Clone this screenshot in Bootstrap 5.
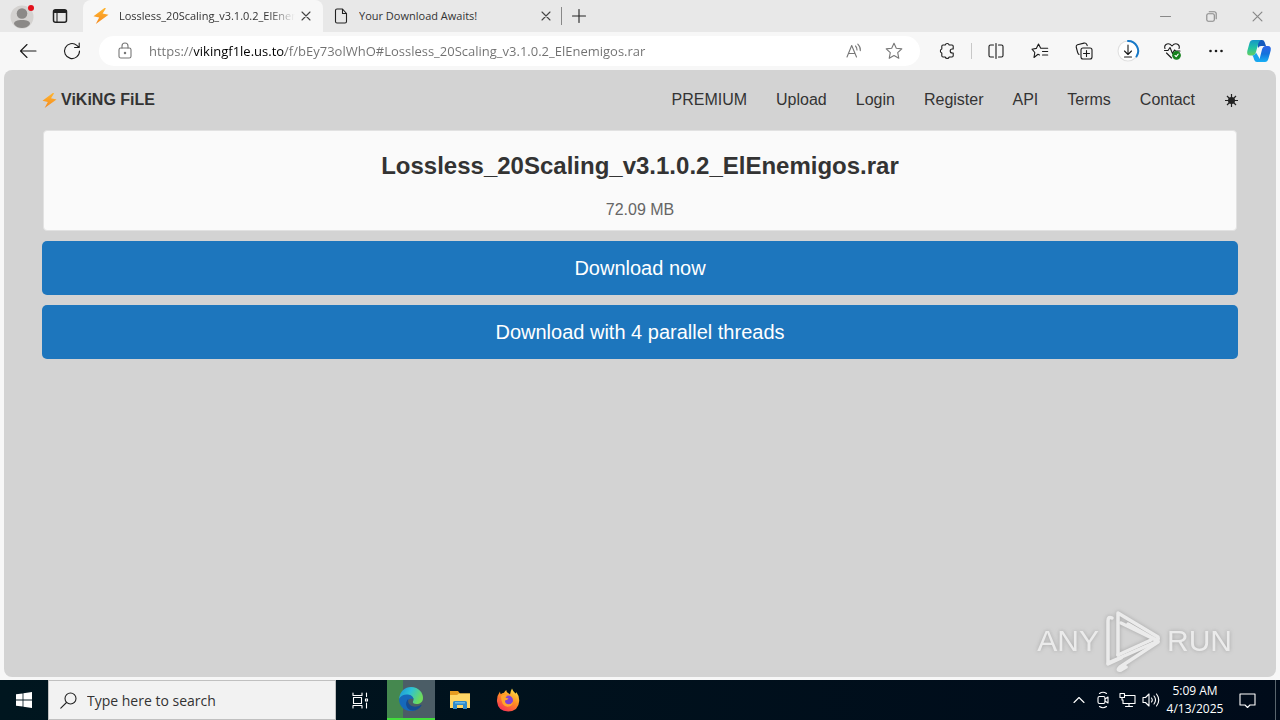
<!DOCTYPE html>
<html lang="en">
<head>
<meta charset="utf-8">
<meta name="viewport" content="width=device-width, initial-scale=1">
<title>Lossless_20Scaling_v3.1.0.2_ElEnemigos.rar</title>
<link href="https://cdn.jsdelivr.net/npm/bootstrap@5.3.0/dist/css/bootstrap.min.css" rel="stylesheet">
<style>
  body { background: #f7f7f7; font-family: "Open Sans", "Noto Sans", sans-serif; font-size: 12px; color: #222; }
  button, a { color: inherit; }
  svg { display: block; flex: none; }
  .ic { fill: none; stroke: currentColor; stroke-width: 1.1; stroke-linecap: round; stroke-linejoin: round; }
  .icon-btn { display: flex; align-items: center; justify-content: center; flex: none; padding: 0; border: 0; background: none; }

  /* window frame */
  .title-strip { background: #e8e8e8; height: 32px; padding-left: 3px; }
  .title-strip .icon-btn { width: 38px; height: 32px; }
  .title-strip .win-btn { width: 46px; color: #888; }
  .tab-item { width: 238px; height: 32px; padding: 0 4px 0 10px; gap: 10px; font-size: 11px; flex: none; }
  .tab-item.current { width: 240px; padding-right: 6px; background: #f7f7f7; border-radius: 8px 8px 0 0; }
  .tab-item .icon-btn { width: 22px; margin-left: -10px; color: #444; }
  .tab-item a { color: #333; text-decoration: none; white-space: nowrap; overflow: hidden; }
  .current a { -webkit-mask-image: linear-gradient(to right, #000 85%, transparent); mask-image: linear-gradient(to right, #000 85%, transparent); }
  .tab-line { width: 1px; height: 18px; background: #888; }
  .title-strip .new-btn { width: 34px; }

  .tool-strip { height: 38px; padding-left: 6px; background: #f7f7f7; }
  .tool-strip .icon-btn { width: 44px; height: 36px; color: #1b1b1b; }
  .tool-strip .copilot-btn { width: 42px; }
  .address { height: 30px; border-radius: 15px; background: #fff; padding: 0 6px 0 4px; margin: 0 5px; }
  .address .icon-btn { color: #777; }
  .address .icon-btn.slim { width: 40px; }
  .address input { border: 0; outline: 0; padding: 0 0 0 2px; min-width: 0; font-size: 13px; height: 24px; color: transparent;
    background: linear-gradient(to right, #707070 47px, #000 47px, #000 138px, #707070 138px); -webkit-background-clip: text; background-clip: text; }
  .tool-line { width: 1px; height: 16px; background: #c8c8c8; margin: 0 2px; }

  /* site */
  .site { background: #d3d3d3; border-radius: 8px; margin: 0 4px 3px; padding: 0 38px; font-family: "Liberation Sans", Arial, sans-serif; font-size: 16px; color: #333; }
  .site-nav { height: 60px; padding: 0; }
  .site-nav a { color: #333; text-decoration: none; }
  .site-nav .brand-link { font-weight: bold; gap: 4px; }
  .site-links { gap: 29px; }
  .site-links .icon-btn { width: 13px; margin-left: 1px; }
  .file-card { background: #fafafa; border: 1px solid #e2e2e2; border-radius: 4px; margin: 0 1px 10px; padding: 19px 0 8px; color: #333; }
  .file-card h1 { font-size: 24px; line-height: 32px; font-weight: bold; margin: 0 0 16px; }
  .file-card p { line-height: 24px; color: #666; margin: 0; }
  .get-list { gap: 10px; }
  .get-btn { background: #1d76bd; color: #fff; border: 0; border-radius: 5px; height: 54px; font-size: 20px; padding: 0; }
  .get-btn:hover { background: #1a69a8; color: #fff; }
  .stamp { position: absolute; right: 44px; bottom: 4px; color: #f2f2f2; font-size: 30px; line-height: 64px; gap: 5px; opacity: .8; filter: drop-shadow(0 0 2px #999); }

  /* taskbar */
  .taskbar { height: 40px; background: linear-gradient(to right, #00161f, #000b1a); color: #fff; }
  .taskbar .icon-btn { width: 48px; height: 40px; }
  .taskbar .tray-btn { width: 24px; }
  .taskbar .edge-app { margin-left: 3px; margin-right: 1px; background: linear-gradient(to right, #45884f 16px, #4b5d66 16px); border-bottom: 2px solid #43de3c; }
  .search-box { width: 288px; background: #f2f2f2; border: 1px solid #c0c0c0; color: #222; padding-left: 11px; gap: 10px; }
  .search-box input { border: 0; background: none; outline: 0; min-width: 0; font-size: 14px; padding: 0; }
  .search-box input::placeholder { color: #333; opacity: 1; }
  .clock-btn { width: 64px; line-height: 18px; border: 0; background: none; padding: 0; font-size: 12px; white-space: nowrap; }
  .taskbar .note-btn { width: 40px; }
  .desk-peek { width: 5px; border-left: 1px solid #59656d; margin-left: 8px; }
</style>
</head>
<body class="d-flex flex-column min-vh-100">

<svg width="0" height="0" class="position-absolute" aria-hidden="true">
  <defs>
    <linearGradient id="bolt" x1="0" y1="0" x2="0" y2="1"><stop offset="0" stop-color="#ffb52e"/><stop offset="1" stop-color="#f58a1f"/></linearGradient>
    <symbol id="bolt-shape" viewBox="0 0 16 16"><path fill="url(#bolt)" d="M11.500 0 .5 8.300l5.700 1.200L2.800 16l12.700-9.200-5.900-1.200L13 .3z"/></symbol>
    <symbol id="cross" viewBox="0 0 10 10"><path d="m1 1 8 8M9 1 1 9"/></symbol>
  </defs>
</svg>

<header>
  <div class="title-strip d-flex align-items-center">
    <button class="icon-btn" aria-label="Profile">
      <svg width="30" height="30" viewBox="0 0 30 30"><circle cx="15" cy="16" r="11.5" fill="#d4d2d0"/><circle cx="15" cy="12.500" r="5.300" fill="#8b8987"/><path fill="#8b8987" d="M7 23c0-3 3-4 8-4s8 1 8 4c-2 3-5 4-8 4s-6-1-8-4z"/><circle cx="24" cy="7" r="3" fill="#e3111c"/></svg>
    </button>
    <button class="icon-btn" aria-label="Tab actions">
      <svg class="ic" width="16" height="16" viewBox="0 0 16 16" stroke="#111"><rect x="1.500" y="1.800" width="13" height="12.500" rx="2" stroke-width="1.500"/><path d="M2.500 3.500h11" stroke-width="3"/><path d="M5 5v9"/></svg>
    </button>
    <div class="tab-item current d-flex align-items-center ms-1">
      <svg width="16" height="16"><use href="#bolt-shape"/></svg>
      <a href="#" class="flex-grow-1">Lossless_20Scaling_v3.1.0.2_ElEnemigos.rar</a>
      <button class="icon-btn" aria-label="Close tab"><svg class="ic" width="10" height="10"><use href="#cross"/></svg></button>
    </div>
    <div class="tab-item d-flex align-items-center">
      <svg class="ic" width="16" height="16" viewBox="0 0 16 16"><path d="M2.500 2.500q0-1.500 1.500-1.500h5.500l4 4.500V13.500q0 1.500-1.500 1.500H4q-1.500 0-1.500-1.500zM9.500 1v4.500h4"/></svg>
      <a href="#" class="flex-grow-1">Your Download Awaits!</a>
      <button class="icon-btn" aria-label="Close tab"><svg class="ic" width="10" height="10"><use href="#cross"/></svg></button>
    </div>
    <span class="tab-line"></span>
    <button class="icon-btn new-btn" aria-label="New tab"><svg class="ic" width="14" height="14" viewBox="0 0 14 14"><path d="M7 .5v13M.5 7h13"/></svg></button>
    <div class="d-flex ms-auto">
      <button class="icon-btn win-btn" aria-label="Minimize"><svg class="ic" width="11" height="11" viewBox="0 0 11 11"><path d="M.5 5.500h10"/></svg></button>
      <button class="icon-btn win-btn" aria-label="Restore"><svg class="ic" width="11" height="11" viewBox="0 0 11 11"><rect x=".8" y="2.700" width="7.500" height="7.500" rx="1.500"/><path d="M3.200.8h5q2 0 2 2v5"/></svg></button>
      <button class="icon-btn win-btn" aria-label="Close"><svg class="ic" width="11" height="11"><use href="#cross"/></svg></button>
    </div>
  </div>

  <div class="tool-strip d-flex align-items-center">
    <button class="icon-btn" aria-label="Back"><svg class="ic" width="18" height="16" viewBox="0 0 18 16"><path d="M17 8H1.500M8 1.500 1.500 8 8 14.500"/></svg></button>
    <button class="icon-btn" aria-label="Reload"><svg class="ic" width="18" height="18" viewBox="0 0 18 18"><path d="M16.500 9A7.500 7.500 0 1 1 13.800 3.300L16 5.400M16.200 1v4.500h-4.600"/></svg></button>
    <div class="address d-flex align-items-center flex-grow-1">
      <button class="icon-btn" aria-label="Site information"><svg class="ic" width="14" height="18" viewBox="0 0 14 18"><rect x="1" y="6" width="12" height="10" rx="1.800"/><path d="M4 6V4q0-3 3-3t3 3v2"/><circle cx="7" cy="11" r=".7" fill="currentColor"/></svg></button>
      <input class="flex-grow-1" type="text" aria-label="Address" value="https://vikingf1le.us.to/f/bEy73olWhO#Lossless_20Scaling_v3.1.0.2_ElEnemigos.rar">
      <button class="icon-btn slim" aria-label="Read aloud"><svg class="ic" width="16" height="16" viewBox="0 0 16 16"><path d="M1 14 5.700 2.500 10.500 14M2.500 10.500H9M9.500 3q1.500 1.500 1.500 4M11.800 1.200q3 3 2.500 6.500"/></svg></button>
      <button class="icon-btn slim" aria-label="Add to favorites"><svg class="ic" width="18" height="18" viewBox="0 0 18 18"><path d="m9 1.200 2.300 5.100 5.500.6-4.100 3.800 1.100 5.600L9 13.500l-4.800 2.800 1.100-5.600L1.200 6.900l5.500-.6z"/></svg></button>
    </div>
    <button class="icon-btn" aria-label="Extensions"><svg class="ic" width="17" height="18" viewBox="0 0 17 18"><path d="M4 3h2.200a2.100 2.100 0 0 1 4 0H13q1.200 0 1.200 1.200V7h-1a2 2 0 0 0 0 4h1v2.800q0 1.200-1.200 1.200h-2.800a2.100 2.100 0 0 1-4 0H4q-1.200 0-1.200-1.200V11a2.100 2.100 0 0 1 0-4V4.200Q2.800 3 4 3z"/></svg></button>
    <span class="tool-line"></span>
    <button class="icon-btn" aria-label="Split screen"><svg class="ic" width="16" height="16" viewBox="0 0 16 16"><path d="M8 .5v15M5.500 2H2.500Q1 2 1 3.500v9Q1 14 2.500 14h3M10.500 2h3Q15 2 15 3.500v9q0 1.500-1.500 1.500h-3"/></svg></button>
    <button class="icon-btn" aria-label="Favorites"><svg class="ic" width="18" height="18" viewBox="0 0 18 18"><path d="M8.500 13 7 12.300 3 15.500l.8-5L1 7.200l4.300-.8L7.500 2l2.200 4.300h7M11.500 9.500h5.200M11.500 13h5.200"/></svg></button>
    <button class="icon-btn" aria-label="Collections"><svg class="ic" width="18" height="18" viewBox="0 0 18 18"><rect x="6" y="6" width="11" height="11" rx="2"/><path d="M11.500 8.500v6M8.500 11.500h6M4 12.500Q3 12 2.500 10L1.200 5Q1 3.200 2.500 2.700L9 1.100q2-.4 2.800 1.300l.4 1.200"/></svg></button>
    <button class="icon-btn" aria-label="Downloads"><svg class="ic" width="24" height="24" viewBox="0 0 24 24"><circle cx="12" cy="12" r="10" fill="#fff" stroke="#e0e0e0"/><path d="M12 2a10 10 0 0 1 8.500 15.500" stroke="#1879c8" stroke-width="2"/><path d="M12 6v9M8.500 12l3.500 3.500 3.500-3.500M8.500 18h7"/></svg></button>
    <button class="icon-btn" aria-label="Browser essentials"><svg class="ic" width="18" height="18" viewBox="0 0 18 18"><path d="M2 6.500Q1 4 3 2.500 6 .5 9 4q3-3.500 6-1.500 2 1.500 1 4M1.500 8.500H5l2-3 2.500 6 2-3.500 1 1H17M3.500 11 8.500 16"/><circle cx="13.500" cy="13.300" r="3.800" fill="#16811d" stroke="#16811d"/><path d="m12 13.500 1.200 1.200 2-2.500" stroke="#fff"/></svg></button>
    <button class="icon-btn" aria-label="Settings and more"><svg width="16" height="6" viewBox="0 0 16 6" fill="currentColor"><circle cx="2.500" cy="3" r="1.300"/><circle cx="8" cy="3" r="1.300"/><circle cx="13.500" cy="3" r="1.300"/></svg></button>
    <button class="icon-btn copilot-btn" aria-label="Copilot">
      <svg width="26" height="26" viewBox="0 0 26 26"><defs><linearGradient id="cpa" x1="0" y1="0" x2="0" y2="1"><stop offset="0" stop-color="#1596c9"/><stop offset=".5" stop-color="#20c1a5"/><stop offset="1" stop-color="#63cf62"/></linearGradient><linearGradient id="cpb" x1="0" y1="0" x2="0" y2="1"><stop offset="0" stop-color="#2e63e8"/><stop offset=".5" stop-color="#1273dc"/><stop offset="1" stop-color="#18b0f6"/></linearGradient></defs>
      <path fill="#1459bd" d="M11 2h5q2 0 2.700 2.200L20 8h-5q-2 0-3 2z"/><path fill="url(#cpa)" d="M7 2h8q-2 1-2.700 3.500L10 14q-1 3.500-4 3.500H4Q.5 17.500 1.300 13L3.500 5Q4.300 2 7 2z"/><path fill="#19a6ed" d="M6 17.500q3 0 4-3l3 5 2 4.500h-4q-2 0-2.700-2L7.300 19q-.4-1.500-1.300-1.500z"/><path fill="url(#cpb)" d="M19.500 8H22q3.500 0 2.700 4.500L22.500 20.500Q21.500 24 19 24h-8q2-1 2.700-3.500L16 11.500Q17 8 19.500 8z"/></svg>
    </button>
  </div>
</header>

<main class="site flex-grow-1 position-relative">
  <nav class="site-nav d-flex align-items-center justify-content-between" aria-label="Site">
    <a class="brand-link d-flex align-items-center" href="#"><svg width="15" height="15"><use href="#bolt-shape"/></svg>ViKiNG FiLE</a>
    <div class="site-links d-flex align-items-center">
      <a href="#">PREMIUM</a>
      <a href="#">Upload</a>
      <a href="#">Login</a>
      <a href="#">Register</a>
      <a href="#">API</a>
      <a href="#">Terms</a>
      <a href="#">Contact</a>
      <button class="icon-btn" aria-label="Toggle theme"><svg width="13" height="13" viewBox="0 0 13 13"><circle cx="6.500" cy="6.500" r="3.500" fill="#222"/><path stroke="#222" stroke-width="1.200" d="M6.500 0v13M0 6.500h13M2 2l9 9M11 2l-9 9"/></svg></button>
    </div>
  </nav>
  <section class="file-card text-center">
    <h1>Lossless_20Scaling_v3.1.0.2_ElEnemigos.rar</h1>
    <p>72.09 MB</p>
  </section>
  <div class="get-list d-grid">
    <button class="btn get-btn" type="button">Download now</button>
    <button class="btn get-btn" type="button">Download with 4 parallel threads</button>
  </div>
  <div class="stamp d-flex align-items-center">
    <span>ANY</span>
    <svg width="58" height="64" viewBox="0 0 58 64" fill="none" stroke="currentColor" stroke-width="3.500" stroke-linejoin="round" stroke-linecap="round"><path d="M8 9q-4-2-4 3v42l50-22-37-18"/><path d="M14 46V4l40 24q1 3-2 3L24 15"/><path d="M14 46 47 31M4 55l13-6M54 33 16 58q-4 4 1 3l5-3"/></svg>
    <span>RUN</span>
  </div>
</main>

<footer class="taskbar d-flex">
  <button class="icon-btn" aria-label="Start"><svg width="16" height="16" viewBox="0 0 16 16" fill="#fff"><path d="M0 2.300 6.600 1.400v6.200H0zM7.400 1.300 16 0v7.600H7.400zM0 8.400h6.600v6.200L0 13.700zM7.400 8.400H16V16l-8.600-1.300z"/></svg></button>
  <label class="search-box d-flex align-items-center">
    <svg class="ic" width="17" height="17" viewBox="0 0 17 17"><circle cx="10.500" cy="6.500" r="5.500"/><path d="M6.500 10.500.8 16.200"/></svg>
    <input class="flex-grow-1" type="text" placeholder="Type here to search" aria-label="Search">
  </label>
  <button class="icon-btn" aria-label="Task view"><svg class="ic" width="17" height="17" viewBox="0 0 17 17"><path d="M1 1v2.500h9V1M1 16v-2.500h9V16M1.500 5.500h8v6h-8zM14.500 1v3.500M14.500 11v5M13.500 7h2v2h-2z"/></svg></button>
  <button class="icon-btn edge-app" aria-label="Microsoft Edge">
    <svg width="26" height="26" viewBox="0 0 26 26"><defs><linearGradient id="eda" x1="0" y1="0" x2="1" y2=".4"><stop offset="0" stop-color="#1b8fd6"/><stop offset=".5" stop-color="#2dc1d6"/><stop offset="1" stop-color="#6ddb5c"/></linearGradient></defs><path fill="url(#eda)" d="M1 13C2 5 7 1 13 1c8 0 12 6 12 11 0 4-3 6-6.500 6-3 0-4-1.300-3.500-2.500 2-3-1-6.500-5-6.500-4 0-7 1.500-9 4z"/><path fill="#1669bb" d="M1 13c2-4 6-5 9-4.500 3 .3 5 2 5.500 4.500-4-2-7 2-5.500 6 1.500 4 6 5 9.500 4-2 1.500-4 2-6.500 2C5 25 1 19 1 13z"/><path fill="#164b91" d="M10.500 12.500c-1 2-.5 5 2 6.800 3 2.200 7.500 1.700 10-.3.700-.5 1.300 0 .8.800-2 3-5.300 5-8.800 4.800-5.500-.3-9-7-4-12.100z"/></svg>
  </button>
  <button class="icon-btn" aria-label="File Explorer"><svg width="22" height="20" viewBox="0 0 22 20"><path fill="#e69d21" d="M1 1h8l2 2.500h10V8H1z"/><path fill="#ffd766" d="M1 5h7l2-1.500h11V18H1z"/><path fill="#2f8bcb" d="M4 19v-6.500Q4 11 5.500 11h11q1.500 0 1.500 1.500V19h-4v-4H8v4z"/><path fill="#68b8e7" d="M6 12h10v1.500H6z"/></svg></button>
  <button class="icon-btn" aria-label="Firefox">
    <svg width="24" height="24" viewBox="0 0 24 24"><defs><linearGradient id="ffa" x1=".8" y1="0" x2=".2" y2="1"><stop offset="0" stop-color="#ffe447"/><stop offset=".45" stop-color="#ff8f22"/><stop offset="1" stop-color="#f52b58"/></linearGradient></defs><path fill="url(#ffa)" d="M4 3.500q0 1.700.8 2.800Q6 5 8 4.700 9 2.700 10.500 2 10 4 12 5q1.500.8 2 1.500.5-3.500 2-6 1 3 3.500 5 .8-.5.8-1.500Q23.500 8 23.200 13q-.5 10-11 10.500Q2 23.300 1 13.500.6 8 4 3.500z"/><circle cx="12" cy="12.500" r="5" fill="#8042d6"/><path fill="#ffa52b" d="M5 8q3-2.500 7 0-2 .2-2.500 1.200 1 1.300 3 .8-.5 2-3.500 2.500-.3 3.500 3.500 3.800 3 0 4.500-2.800-.5 5-5.500 5.200Q5 18 5 8z"/></svg>
  </button>
  <div class="d-flex align-items-center ms-auto">
    <button class="icon-btn tray-btn" aria-label="Show hidden icons"><svg class="ic" width="12" height="8" viewBox="0 0 12 8"><path d="m1 6.500 5-5 5 5"/></svg></button>
    <button class="icon-btn tray-btn" aria-label="Meet now"><svg class="ic" width="14" height="18" viewBox="0 0 14 18"><rect x="2" y="5.500" width="7" height="7" rx="1.500"/><path d="m9 8 3-2v6l-3-2M3.500 2.500Q7 0 10.500 2.500M3.500 15.500Q7 18 10.500 15.500"/></svg></button>
    <button class="icon-btn tray-btn" aria-label="Network"><svg class="ic" width="17" height="16" viewBox="0 0 17 16"><path d="M6 3.500h10v8H4V8M1 1.500h4.500v4H1zM3 5.500V8h1M10 11.500v3M6.500 14.500h7"/></svg></button>
    <button class="icon-btn tray-btn" aria-label="Volume"><svg class="ic" width="18" height="16" viewBox="0 0 18 16"><path d="M1 5.500h2.500L7 2v12l-3.500-3.500H1zM9.500 6q1.500 2 0 4M12 4q3 4 0 8M14.500 2q4.500 6 0 12"/></svg></button>
    <button class="clock-btn">5:09 AM<br>4/13/2025</button>
    <button class="icon-btn note-btn" aria-label="Notifications"><svg class="ic" width="17" height="17" viewBox="0 0 17 17"><path d="M1 2h15v11h-5l-2.500 2.500L6 13H1z"/></svg></button>
    <span class="desk-peek align-self-stretch"></span>
  </div>
</footer>

<script src="https://cdn.jsdelivr.net/npm/bootstrap@5.3.0/dist/js/bootstrap.bundle.min.js"></script>
</body>
</html>
